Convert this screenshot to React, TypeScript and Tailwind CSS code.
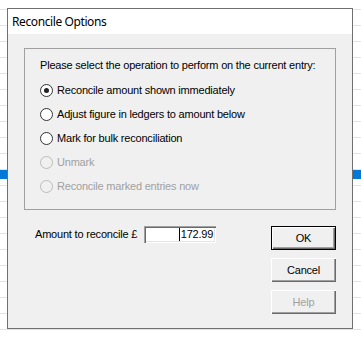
import React from 'react'

const options = [
  { label: 'Reconcile amount shown immediately', checked: true, disabled: false },
  { label: 'Adjust figure in ledgers to amount below', checked: false, disabled: false },
  { label: 'Mark for bulk reconciliation', checked: false, disabled: false },
  { label: 'Unmark', checked: false, disabled: true },
  { label: 'Reconcile marked entries now', checked: false, disabled: true },
]

const Radio = ({ checked, disabled }: { checked: boolean; disabled: boolean }) => (
  <span
    className={`flex h-[13px] w-[13px] shrink-0 items-center justify-center rounded-full border ${
      disabled ? 'border-[#bcbcbc] bg-[#f0f0f0]' : 'border-[#333333] bg-white'
    }`}
  >
    {checked && <span className="h-[5px] w-[5px] rounded-full bg-[#222222]" />}
  </span>
)

const btnBase =
  'flex w-[65px] h-[24px] items-center justify-center bg-[#f0f0f0] text-[11px] shadow-[inset_1px_1px_0_#ffffff,inset_-1px_-1px_0_#696969,inset_-2px_-2px_0_#a0a0a0]'

export default function App() {
  return (
    <div className="relative h-[340px] w-[361px] overflow-hidden bg-white bg-[repeating-linear-gradient(to_bottom,transparent_0px,transparent_9px,#e4e4e4_9px,#e4e4e4_10px,transparent_10px,transparent_16px)] font-['Liberation_Sans',Arial,sans-serif] text-[11px] tracking-[-0.2px] text-black">
      {/* selected row behind the dialog */}
      <div className="absolute left-0 right-0 top-[170px] h-[9px] bg-[#0078d7]" />

      <div className="relative ml-[7px] mt-[8px] flex h-[321px] w-[346px] flex-col border border-[#707070] bg-[#f0f0f0]">
        <div className="flex h-[25px] items-center bg-white pl-[4px] font-['Noto_Sans',sans-serif] text-[12px] tracking-[-0.4px]">
          Reconcile Options
        </div>

        <div className="flex flex-col px-[16px] pt-[14px]">
          <div className="flex h-[162px] flex-col border border-[#a0a0a0] pl-[15px] pt-[9px]">
            <div className="h-[14px] leading-[14px]">Please select the operation to perform on the current entry:</div>
            <div className="mt-[11px] flex flex-col gap-[10px]">
              {options.map((o, i) => (
                <div key={i} className="flex h-[14px] items-center gap-[4px]">
                  <Radio checked={o.checked} disabled={o.disabled} />
                  <span className={o.disabled ? 'text-[#a0a0a0]' : ''}>{o.label}</span>
                </div>
              ))}
            </div>
          </div>

          <div className="mt-[16px] flex justify-between">
            <div className="flex h-[17px] items-center pl-[11px]">
              <span>Amount to reconcile £</span>
              <div className="ml-[7px] flex h-[17px] w-[72px] items-center justify-end bg-white pr-[3px] shadow-[inset_1px_1px_0_#a0a0a0,inset_2px_2px_0_#696969,inset_-1px_-1px_0_#ffffff,inset_-2px_-2px_0_#e3e3e3]">
                <span className="mr-[1px] h-[13px] w-[1px] bg-black" />
                <span>172.99</span>
              </div>
            </div>

            <div className="flex flex-col gap-[8px]">
              <button className={`${btnBase} border border-black`}>OK</button>
              <button className={btnBase}>Cancel</button>
              <button className={`${btnBase} text-[#a0a0a0]`}>Help</button>
            </div>
          </div>
        </div>
      </div>
    </div>
  )
}
